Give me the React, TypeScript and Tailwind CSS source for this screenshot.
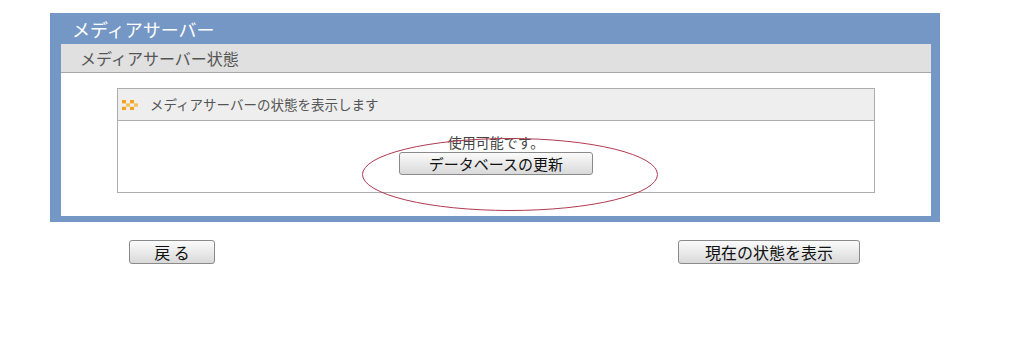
import React from "react";

function DotIcon() {
  const dots: [number, number][] = [
    [0, 0], [1, 1], [0, 2], [2, 0], [3, 1], [2, 2],
  ];
  return (
    <svg width="16" height="10" viewBox="0 0 16 10" className="shrink-0">
      {dots.map(([c, r], i) => (
        <rect key={i} x={c * 4} y={r * 3.4} width="4" height="3.4" fill={c % 2 === 0 ? "#f2a21e" : "#f7c25a"} />
      ))}
    </svg>
  );
}

export default function App() {
  const font = { fontFamily: '"Noto Sans CJK JP", "Noto Sans", sans-serif' };
  return (
    <div className="relative w-[1024px] h-[364px] bg-white overflow-hidden" style={font}>
      <div className="h-[13px]" />
      <div className="ml-[50px] w-[890px] bg-[#7597c5] pl-[11px] pr-[9px] pb-[6px]">
        <div className="h-[31px] flex items-center pl-[11px] text-white text-[18px] leading-none">
          メディアサーバー
        </div>
        <div className="bg-white">
          <div className="h-[29px] bg-[#e0e0e0] border-b border-[#a8a8a8] flex items-center pl-[19px] text-[16px] text-[#555] leading-none">
            メディアサーバー状態
          </div>
          <div className="pt-[15px] pb-[23px]">
            <div className="ml-[56px] w-[758px] h-[105px] border border-[#adadad] flex flex-col">
              <div className="h-[32px] bg-[#eeeeee] border-b border-[#adadad] flex items-center pl-[4px] gap-[12px] text-[13.5px] text-[#555] leading-none">
                <DotIcon />
                <span>メディアサーバーの状態を表示します</span>
              </div>
              <div className="flex-1 flex flex-col items-center pt-[12px]">
                <div className="text-[14px] leading-[18px] text-[#444]">使用可能です。</div>
                <button className="mt-[1px] w-[194px] h-[23px] rounded-[3px] border border-[#8a8a8a] bg-gradient-to-b from-[#fbfbfb] to-[#d9d9d9] text-[15px] leading-none text-[#111] flex items-center justify-center">
                  データベースの更新
                </button>
              </div>
            </div>
          </div>
        </div>
      </div>
      <div className="flex mt-[18px]">
        <button className="ml-[129px] w-[86px] h-[24px] rounded-[3px] border border-[#8a8a8a] bg-gradient-to-b from-[#fbfbfb] to-[#d9d9d9] text-[16px] leading-none text-[#111] flex items-center justify-center">
          戻&nbsp;る
        </button>
        <button className="ml-[463px] w-[182px] h-[24px] rounded-[3px] border border-[#8a8a8a] bg-gradient-to-b from-[#fbfbfb] to-[#d9d9d9] text-[16px] leading-none text-[#111] flex items-center justify-center">
          現在の状態を表示
        </button>
      </div>
      <svg className="absolute left-[361px] top-[137px] pointer-events-none" width="298" height="75" viewBox="0 0 298 75">
        <ellipse cx="149" cy="37.5" rx="147.5" ry="36" fill="none" stroke="#b03a50" strokeWidth="1" />
      </svg>
    </div>
  );
}
